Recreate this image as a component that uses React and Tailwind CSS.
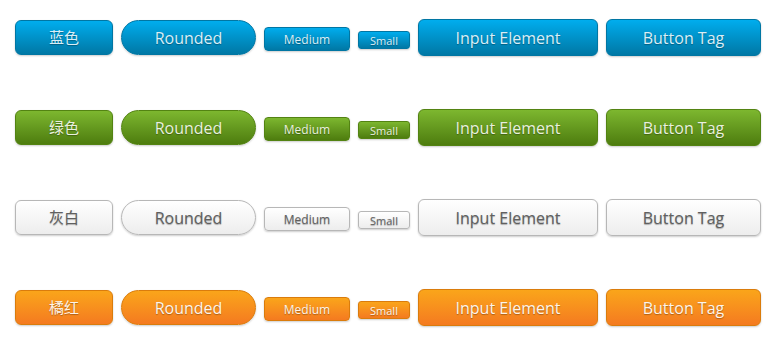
import React from 'react';

const themes = {
	blue: 'text-[#d9eef7] border-[#0076a3] bg-gradient-to-b from-[#00adee] to-[#0078a5] [text-shadow:0_1px_1px_rgba(0,0,0,0.3)]',
	green: 'text-[#e8f0de] border-[#538312] bg-gradient-to-b from-[#7db72f] to-[#4e7d0e] [text-shadow:0_1px_1px_rgba(0,0,0,0.3)]',
	white: 'text-[#606060] border-[#b7b7b7] bg-gradient-to-b from-[#ffffff] to-[#ededed] [text-shadow:0_1px_1px_rgba(0,0,0,0.3)]',
	orange: 'text-[#fef4e9] border-[#da7c0c] bg-gradient-to-b from-[#faa51a] to-[#f47a20] [text-shadow:0_1px_1px_rgba(0,0,0,0.3)]',
};

const rows = [
	{ key: 'blue', label: '蓝色' },
	{ key: 'green', label: '绿色' },
	{ key: 'white', label: '灰白' },
	{ key: 'orange', label: '橘红' },
];

const base = 'flex items-center justify-center border shadow-[0_1px_2px_rgba(0,0,0,0.2)] shrink-0 leading-none';

const App = () => {
	return (
		<div className="w-[778px] h-[346px] bg-white pl-[15px] pt-[20px] flex flex-col gap-[55px] font-['Open_Sans','Noto_Sans_CJK_SC',sans-serif]">
			{rows.map((r) => {
				const t = themes[r.key];
				return (
					<div key={r.key} className="flex items-start gap-2 h-[35px]">
						<div className={`${base} ${t} w-[98px] h-[35px] rounded-[6px] text-[15px]`}>{r.label}</div>
						<div className={`${base} ${t} w-[135px] h-[35px] rounded-full text-[16px] pt-[1px]`}>Rounded</div>
						<div className={`${base} ${t} w-[86px] h-[24px] mt-[7px] rounded-[4px] text-[12px] pt-[2px]`}>Medium</div>
						<div className={`${base} ${t} w-[52px] h-[18px] mt-[11px] rounded-[3px] text-[11px] pt-[1px]`}>Small</div>
						<div className={`${base} ${t} w-[180px] h-[37px] -mt-[1px] rounded-[6px] text-[16px] pt-[1px]`}>Input Element</div>
						<div className={`${base} ${t} w-[155px] h-[37px] -mt-[1px] rounded-[6px] text-[16px] pt-[1px]`}>Button Tag</div>
					</div>
				);
			})}
		</div>
	);
};

export default App;
